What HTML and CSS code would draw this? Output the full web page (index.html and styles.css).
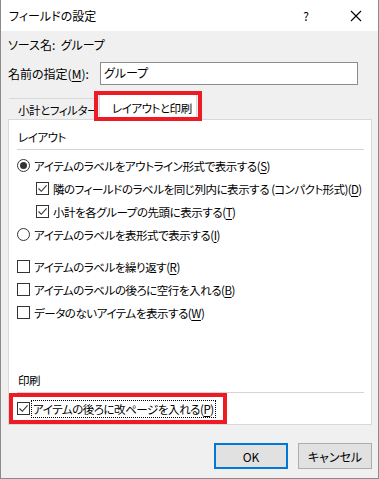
FILE: index.html
```html
<!DOCTYPE html>
<html lang="ja">
<head>
<meta charset="utf-8">
<link rel="stylesheet" href="styles.css">
</head>
<body>
<div class="window">
  <div class="titlebar">
    <span class="title">フィールドの設定</span>
    <span class="help">?</span>
    <span class="close">
      <svg width="12" height="12" viewBox="0 0 12 12"><path d="M1 1 L11 11 M11 1 L1 11" stroke="#000" stroke-width="1.1" fill="none"/></svg>
    </span>
  </div>
  <div class="content">
    <div class="source">ソース名:&nbsp;&nbsp;グループ</div>
    <div class="namerow">
      <span class="namelabel">名前の指定(<u>M</u>):</span>
      <div class="input">グループ</div>
    </div>
    <div class="tabs">
      <div class="tab inactive">小計とフィルター</div>
      <div class="tab active">レイアウトと印刷</div>
    </div>
    <div class="panel">
      <div class="heading">レイアウト</div>
      <div class="sep"></div>
      <div class="opts">
        <div class="row"><span class="radio on"></span><span>アイテムのラベルをアウトライン形式で表示する(<u>S</u>)</span></div>
        <div class="row sub"><span class="check on"><svg width="11" height="11" viewBox="0 0 11 11"><path d="M1.5 5.5 L4.3 8.3 L9.6 2.4" stroke="#333" stroke-width="1.1" fill="none"/></svg></span><span>隣のフィールドのラベルを同じ列内に表示する <span class="tight">(コンパクト形式)(<u>D</u>)</span></span></div>
        <div class="row sub"><span class="check on"><svg width="11" height="11" viewBox="0 0 11 11"><path d="M1.5 5.5 L4.3 8.3 L9.6 2.4" stroke="#333" stroke-width="1.1" fill="none"/></svg></span><span>小計を各グループの先頭に表示する(<u>T</u>)</span></div>
        <div class="row"><span class="radio"></span><span>アイテムのラベルを表形式で表示する(<u>I</u>)</span></div>
      </div>
      <div class="opts second">
        <div class="row"><span class="check"></span><span>アイテムのラベルを繰り返す(<u>R</u>)</span></div>
        <div class="row"><span class="check"></span><span>アイテムのラベルの後ろに空行を入れる(<u>B</u>)</span></div>
        <div class="row"><span class="check"></span><span>データのないアイテムを表示する(<u>W</u>)</span></div>
      </div>
      <div class="print">
        <div class="heading">印刷</div>
        <div class="sep"></div>
        <div class="printrow">
          <div class="row hl"><span class="check on"><svg width="11" height="11" viewBox="0 0 11 11"><path d="M1.5 5.5 L4.3 8.3 L9.6 2.4" stroke="#333" stroke-width="1.1" fill="none"/></svg></span><span class="focus">アイテムの後ろに改ページを入れる(<u>P</u>)</span></div>
        </div>
      </div>
    </div>
    <div class="buttons">
      <div class="btn default">OK</div>
      <div class="btn">キャンセル</div>
    </div>
  </div>
</div>
</body>
</html>
```
FILE: styles.css
```css
html, body {
  margin: 0;
  padding: 0;
}
body {
  width: 379px;
  height: 479px;
  overflow: hidden;
  font-family: "Noto Sans CJK JP", "Noto Sans", sans-serif;
  font-size: 12px;
  color: #000;
  font-feature-settings: "palt";
}
u { text-decoration: underline; text-underline-offset: 2px; }
.window {
  width: 379px;
  height: 479px;
  box-sizing: border-box;
  border: 1px solid #8a8a8a;
  border-top: none;
  background: #f0f0f0;
  display: flex;
  flex-direction: column;
}
.titlebar {
  height: 31px;
  background: #fff;
  display: flex;
  align-items: center;
  padding-left: 8px;
  flex-shrink: 0;
}
.title { flex: 1; line-height: 16px; }
.help { width: 12px; text-align: center; margin-right: 38px; font-size: 12px; }
.close { width: 12px; height: 12px; margin-right: 16px; display: flex; }
.content {
  padding: 6px 7px 0 6px;
  display: flex;
  flex-direction: column;
}
.source { line-height: 16px; padding-left: 1px; }
.namerow {
  display: flex;
  align-items: center;
  margin-top: 9px;
  height: 23px;
}
.namelabel { width: 92px; padding-left: 1px; }
.input {
  width: 258px;
  height: 23px;
  box-sizing: border-box;
  border: 1px solid #8c8c8c;
  background: #fff;
  padding: 2px 0 0 3px;
  line-height: 16px;
}
.tabs, .panel {
  font-size: 11.5px;
  letter-spacing: -0.45px;
}
.tight { letter-spacing: -0.6px; }
.tabs {
  display: flex;
  align-items: flex-end;
  margin-top: 9px;
  height: 26px;
  position: relative;
  z-index: 2;
  margin-bottom: -1px;
}
.tab { box-sizing: border-box; line-height: 16px; white-space: nowrap; }
.inactive {
  width: 90px;
  height: 22px;
  border-top: 1px solid #d9d9d9;
  margin-left: 2px;
  padding: 3px 0 0 9px;
}
.active {
  position: relative;
  width: 98px;
  height: 26px;
  background: #fff;
  border: 1px solid #d9d9d9;
  border-bottom: none;
  padding: 5px 0 0 12px;
}
.active::after {
  content: "";
  position: absolute;
  left: -6px;
  right: -6px;
  top: -4px;
  bottom: -1px;
  border: 4px solid #ed1c24;
}
.panel {
  width: 364px;
  height: 306px;
  box-sizing: border-box;
  border: 1px solid #d9d9d9;
  background: #fff;
  margin-left: 1px;
  padding: 9px 7px 0 8px;
  display: flex;
  flex-direction: column;
}
.heading { line-height: 16px; padding-left: 1px; }
.sep { height: 1px; background: #d5d5d5; margin-top: 4px; }
.opts { margin-top: 4px; display: flex; flex-direction: column; }
.opts.second { margin-top: 9px; }
.row {
  height: 23px;
  display: flex;
  align-items: center;
  white-space: nowrap;
}
.row.sub { padding-left: 19px; }
.radio {
  width: 13px;
  height: 13px;
  box-sizing: border-box;
  border: 1px solid #333;
  border-radius: 50%;
  margin-right: 4px;
  display: flex;
  align-items: center;
  justify-content: center;
  flex-shrink: 0;
}
.radio.on::after {
  content: "";
  width: 7px;
  height: 7px;
  border-radius: 50%;
  background: #333;
}
.check {
  width: 13px;
  height: 13px;
  box-sizing: border-box;
  border: 1px solid #333;
  margin-right: 4px;
  display: flex;
  align-items: center;
  justify-content: center;
  flex-shrink: 0;
}
.print { margin-top: auto; padding-bottom: 4px; }
.printrow { margin-top: 4px; display: flex; }
.hl {
  outline: 4px solid #ed1c24;
  margin-left: -4px;
  padding: 0 8px 0 4px;
}
.hl .check { margin-right: 2px; }
.focus {
  outline: 1px dotted #000;
  padding: 0 1px;
  line-height: 16px;
}
.buttons {
  display: flex;
  justify-content: flex-end;
  gap: 10px;
  margin-top: 18px;
  margin-right: -1px;
}
.btn {
  width: 74px;
  height: 26px;
  box-sizing: border-box;
  background: #e1e1e1;
  border: 1px solid #adadad;
  display: flex;
  align-items: center;
  justify-content: center;
}
.btn.default { border: 2px solid #0078d7; }
```
